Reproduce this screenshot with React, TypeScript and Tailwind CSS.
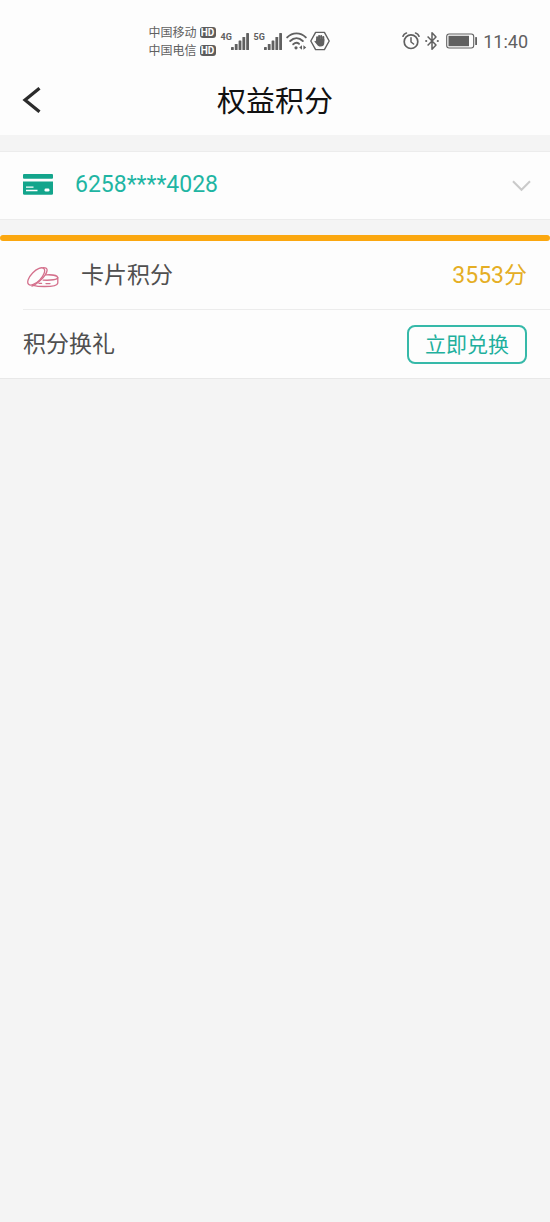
import React from "react";

function SignalBars({ label }: { label: string }) {
  return (
    <div className="flex h-5 items-start">
      <span className="w-[10px] whitespace-nowrap font-['Liberation_Sans_Narrow','Roboto',sans-serif] text-[9px] leading-3 font-bold">
        {label}
      </span>
      <svg className="mt-[2px] h-[17px] w-[18px]" viewBox="0 0 18 17" fill="currentColor" aria-hidden="true">
        <rect x="0" y="14" width="2.8" height="3" rx=".6" />
        <rect x="3.8" y="11" width="2.8" height="6" rx=".6" />
        <rect x="7.6" y="7.5" width="2.8" height="9.5" rx=".6" />
        <rect x="11.4" y="4" width="2.8" height="13" rx=".6" />
        <rect x="15.2" y="0" width="2.8" height="17" rx=".6" />
      </svg>
    </div>
  );
}

function Carrier({ name }: { name: string }) {
  return (
    <div className="flex h-[18px] items-center gap-[3px]">
      <span className="pt-[2px] text-xs leading-4">{name}</span>
      <span className="flex h-[11px] w-4 items-center justify-center rounded-[3px] bg-[#5c5c5c] font-['Roboto',sans-serif] text-[10px] leading-[11px] font-bold text-white">
        HD
      </span>
    </div>
  );
}

function WifiIcon() {
  return (
    <svg className="h-[18px] w-[21px]" viewBox="0 0 21 18" fill="none" stroke="currentColor" strokeWidth="1.9" strokeLinecap="round" aria-hidden="true">
      <path d="M1.2 5.4C6.5 0 14.5 0 19.8 5.4" />
      <path d="M4.2 9C8 5.4 13 5.4 16.8 9" />
      <path d="M7.2 12.3C9.3 10.5 11.4 10.5 13 11.8" />
      <circle cx="10" cy="15.8" r="1.6" fill="currentColor" stroke="none" />
      <path d="M16 13.2v4.6l-2.8-2.3zM17.4 13.2v4.6l2.8-2.3z" fill="currentColor" stroke="none" />
    </svg>
  );
}

function HandIcon() {
  return (
    <svg className="h-5 w-5" viewBox="0 0 20 20" fill="none" aria-hidden="true">
      <path d="M5.6 1.4h8.8L19.2 10l-4.8 8.6H5.6L.8 10z" stroke="currentColor" strokeWidth="1.4" strokeLinejoin="round" />
      <path d="M7.1 10V6.2M9.1 9V5M11.2 9V5M13.3 10V6" stroke="currentColor" strokeWidth="2" strokeLinecap="round" />
      <path d="M6.1 8h8.2v4c0 2.4-1.4 3.6-3.7 3.6-1.8 0-2.8-.7-3.5-1.8L4.4 10.6c.3-1 1.1-.9 1.7-.2z" fill="currentColor" />
    </svg>
  );
}

function AlarmIcon() {
  return (
    <svg className="h-[18px] w-[18px]" viewBox="0 0 18 18" fill="none" stroke="currentColor" strokeWidth="1.7" strokeLinecap="round" aria-hidden="true">
      <circle cx="9" cy="9.7" r="6.8" />
      <path d="M9 5.8v4.2l2.6 2" strokeWidth="1.5" />
      <path d="M1 4.2C1.5 2.6 2.7 1.5 4.4 1M17 4.2C16.5 2.6 15.3 1.5 13.6 1" />
    </svg>
  );
}

function BluetoothIcon() {
  return (
    <svg className="h-5 w-[14px]" viewBox="0 0 14 20" fill="none" stroke="currentColor" strokeWidth="1.5" strokeLinejoin="round" aria-hidden="true">
      <path d="M2.6 5.4l8.4 8.6L7 18.2V1.8L11 6l-8.4 8.6" />
      <circle cx="1.2" cy="10" r="1.1" fill="currentColor" stroke="none" />
      <circle cx="12.8" cy="10" r="1.1" fill="currentColor" stroke="none" />
    </svg>
  );
}

function BatteryIcon() {
  return (
    <svg className="h-4 w-8" viewBox="0 0 32 16" fill="none" aria-hidden="true">
      <rect x=".7" y="1" width="27" height="14" rx="2.4" stroke="currentColor" strokeWidth="1.1" />
      <rect x="2.5" y="2.8" width="20.5" height="10.4" fill="currentColor" />
      <rect x="29.2" y="4" width="1.8" height="8" rx=".6" fill="currentColor" />
    </svg>
  );
}

function CardIcon() {
  return (
    <svg className="mb-[3px] h-[21px] w-[30px] shrink-0" viewBox="0 0 30 21" aria-hidden="true">
      <rect width="30" height="4.8" rx="1" fill="#13a58c" />
      <path d="M0 7.5h30V19.5a1.3 1.3 0 0 1-1.3 1.3H1.3A1.3 1.3 0 0 1 0 19.5z" fill="#13a58c" />
      <path d="M3 13.2h7.5M3 16.5h11.5" stroke="#fff" strokeWidth="1.3" />
      <rect x="21.5" y="14.6" width="5" height="3" rx="1.4" fill="#fff" />
    </svg>
  );
}

function CoinsIcon() {
  return (
    <svg className="mt-[3px] h-[22px] w-8 shrink-0" viewBox="0 0 32 22" fill="none" stroke="#d4708c" strokeWidth="1.3" strokeLinecap="round" strokeLinejoin="round" aria-hidden="true">
      <ellipse cx="9.2" cy="10.4" rx="11" ry="5" transform="rotate(-46 9.2 10.4)" />
      <path d="M16.4 1.6c2.5 0 3.9.6 3.7 2.8-.3 3-3.4 7-6.9 10.2-2.9 2.7-5.3 4.8-8.2 5.4" />
      <path d="M18.8 8.9c6-.4 11.4.6 11.9 2.5.5 2.2-7.2 3.2-14.6 2.7" />
      <path d="M30.8 11.5v5.6c-.3 2.2-6.6 3.4-13.3 3.4-4.5 0-8.5-.4-11.3-1.2" />
      <path d="M12 17.3h2.6M19 17.6h4" />
    </svg>
  );
}

export default function App() {
  return (
    <div className="min-h-screen bg-[#f4f4f4] font-['Roboto','Noto_Sans_CJK_SC',sans-serif] text-[#4f4f4f]">
      <header className="bg-[#fdfdfd]">
        <div className="flex h-16 items-end justify-between pr-[22px] pb-[5px] pl-[27%] text-[#606060]">
          <div className="flex items-center">
            <div>
              <Carrier name="中国移动" />
              <Carrier name="中国电信" />
            </div>
            <div className="ml-[5px] flex items-center gap-[5px]">
              <SignalBars label="4G" />
              <SignalBars label="5G" />
            </div>
            <div className="ml-1 flex items-center gap-[3px]">
              <WifiIcon />
              <HandIcon />
            </div>
          </div>
          <div className="flex h-9 items-center gap-[5px]">
            <AlarmIcon />
            <BluetoothIcon />
            <div className="ml-[2px]">
              <BatteryIcon />
            </div>
            <time className="pt-[2px] text-[18px] leading-5">11:40</time>
          </div>
        </div>
        <div className="grid h-[71px] grid-cols-[1fr_auto_1fr] items-center px-[22px]">
          <button type="button" aria-label="返回" className="flex h-10 w-10 items-center text-[#2b2b2b]">
            <svg className="h-[26px] w-[19px]" viewBox="0 0 19 26" fill="none" stroke="currentColor" strokeWidth="3.2" aria-hidden="true">
              <path d="M17.5 1.2L3 13l14.5 11.8" />
            </svg>
          </button>
          <h1 className="pt-1 text-[29px] leading-10 text-[#111]">权益积分</h1>
        </div>
      </header>

      <main>
        <section className="mt-4 flex h-[69px] items-center border-y border-[#ececec] bg-[#fdfdfd] pr-[19px] pl-[23px]">
          <CardIcon />
          <select
            aria-label="选择卡片"
            className="ml-[22px] h-full min-w-0 flex-1 appearance-none bg-transparent text-[23px] text-[#1fb5a3] outline-none"
          >
            <option>6258****4028</option>
          </select>
          <svg className="h-3 w-[19px] shrink-0" viewBox="0 0 19 12" fill="none" stroke="#cacaca" strokeWidth="2" aria-hidden="true">
            <path d="M1 1.2l8.5 8.6L18 1.2" />
          </svg>
        </section>

        <section className="mt-[15px] border-b border-[#e8e8e8] bg-[#fdfdfd]">
          <div className="h-[6px] rounded-full bg-[#fba70f]" />
          <div className="ml-[23px] flex h-[69px] items-center border-b border-[#ececec] pr-[23px] pl-1">
            <CoinsIcon />
            <h2 className="ml-[22px] flex-1 pt-[2px] text-[23px] leading-8">卡片积分</h2>
            <p className="pt-[2px] text-[23px] leading-8 text-[#e5ae24]">3553分</p>
          </div>
          <div className="flex h-[68px] items-center justify-between px-[23px]">
            <h2 className="pt-[2px] text-[23px] leading-8">积分换礼</h2>
            <button
              type="button"
              className="h-[39px] rounded-lg border-2 border-[#36b9a9] px-4 pt-[2px] text-[21px] leading-8 text-[#1fb09d]"
            >
              立即兑换
            </button>
          </div>
        </section>
      </main>
    </div>
  );
}
